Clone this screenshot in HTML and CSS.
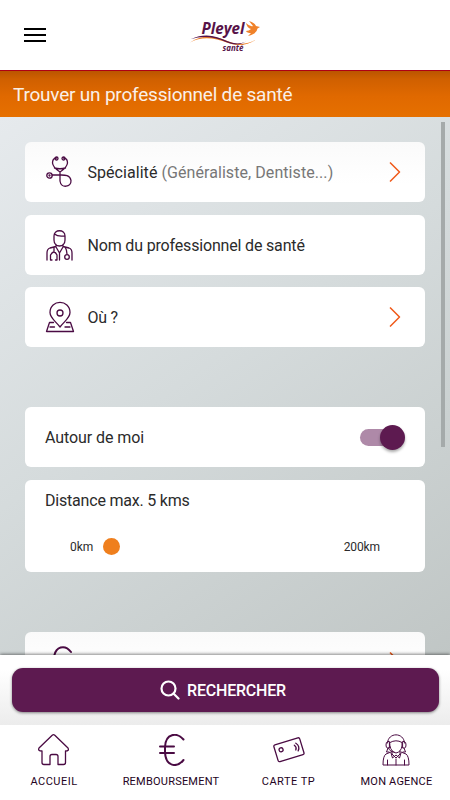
FILE: index.html
```html
<!DOCTYPE html>
<html lang="fr">
<head>
<meta charset="utf-8">
<title>Trouver un professionnel de santé</title>
<link rel="stylesheet" href="styles.css">
</head>
<body>
<div class="app">
  <header class="topbar">
    <div class="menu"><i></i><i></i><i></i></div>
    <svg class="logo" viewBox="0 0 74 36" width="74" height="36">
      <text class="brand" x="12.500" y="16" textLength="43" lengthAdjust="spacingAndGlyphs">Pleyel</text>
      <text class="brand-sub" x="33.500" y="33" textLength="21" lengthAdjust="spacingAndGlyphs">santé</text>
      <path d="M1 24.500C15 15 29 19 41 24Q55 29 68 21Q54 30.500 39 25C25 19.500 13 18 1 24.500Z" fill="#f0822a"/>
      <path d="M2 21C16 14.500 28 18 38 23Q48 27.500 57 23.500Q48 29 37 24C25 18.500 14 17.500 2 21Z" fill="#571349"/>
      <path d="M57 5Q61 9 64 8L60 3Q66 5 67 8L71 9L68.500 10.500Q68 16 59 18L62 15Q58 15 57 13Q60 13 62 11Q58 10 57 5Z" fill="#f0822a"/>
    </svg>
  </header>
  <h1 class="title"><span>Trouver un professionnel de santé</span></h1>
  <main class="content">
    <section class="card card-shade">
      <svg class="icon" viewBox="-2 0 30 32" width="30" height="32">
        <path d="M9.500 2C6.500 2 5.500 4 5.500 7C6 11 9 13.500 13 16C17 13.500 20 11 20.500 7C20.500 4 19.500 2 16.500 2M7.500 12Q13 13.500 18.500 12M13 16V25C14 33 24.500 31 24 24.500C23 18.500 17 19 13 19H5"/>
        <circle cx="9.500" cy="2.500" r="1.500"/><circle cx="16.500" cy="2.500" r="1.500"/><circle cx="2.500" cy="19.500" r="2.700"/><circle cx="2.500" cy="19.500" r=".5"/>
      </svg>
      <span class="label t-spec">Spécialité</span><span class="hint">(Généraliste, Dentiste...)</span>
      <svg class="arrow" viewBox="0 0 12 20" width="12" height="20"><path d="M1 .5L10.500 10L1 19.500"/></svg>
    </section>
    <section class="card">
      <svg class="icon" viewBox="0 0 30 32" width="30" height="32">
        <path d="M9 7C9 0 20 0 20 7V11C20 19 9 19 9 11ZM9.500 5C13 8 16 7 19.500 7M11 15.500V18L14.500 24L18 18V15.500M11 17.500L5 19Q2 20 2 24V31M18 17.500L24 19Q27 20 27 24V31M9 18V23M7 31H5.500V26Q9 20 12 26V31H10.500M14.500 24V31M20 18Q22 21 22 25"/>
        <circle cx="22" cy="28" r="2.300"/>
      </svg>
      <span class="label t-nom">Nom du professionnel de santé</span>
    </section>
    <section class="card">
      <svg class="icon" viewBox="0 0 30 32" width="30" height="32">
        <path d="M15 26C10.500 20 5 17 5 11.500C5-2 25-2 25 11.500C25 17 19.500 20 15 26ZM8.500 21.500H4.500L1.500 30.500H28.500L25.500 21.500H21.500M5 26H9.500M20 26H25"/>
        <circle cx="15" cy="12" r="3"/>
      </svg>
      <span class="label t-ou">Où ?</span>
      <svg class="arrow" viewBox="0 0 12 20" width="12" height="20"><path d="M1 .5L10.500 10L1 19.500"/></svg>
    </section>
    <section class="card card-gap">
      <span class="label t-autour">Autour de moi</span>
      <span class="switch"><span class="knob"></span></span>
    </section>
    <section class="card distance">
      <span class="label t-dist">Distance max. 5 kms</span>
      <div class="range"><span class="t-min">0km</span><span class="dot"></span><span class="max t-max">200km</span></div>
    </section>
    <section class="card card-gap card-shade">
      <svg class="icon euro-card" viewBox="0 0 30 32" width="30" height="32"><path d="M26 6C20-2 10 0 9 12V19C10 31 20 34 26 26M4 12H19M4 19H19"/></svg>
      <svg class="arrow" viewBox="0 0 12 20" width="12" height="20"><path d="M1 .5L10.500 10L1 19.500"/></svg>
    </section>
    <div class="scrollbar"></div>
  </main>
  <div class="actions">
    <button class="search">
      <svg viewBox="0 0 20 20" width="20" height="20"><circle cx="8.500" cy="8.500" r="7"/><path d="M13.500 13.500L18.500 18.500"/></svg>
      <span class="t-search">RECHERCHER</span>
    </button>
  </div>
  <nav class="tabs">
    <a class="tab">
      <svg viewBox="0.500 0 32 32" width="32" height="32"><path d="M14.700 1.200Q16 .2 17.300 1.200L30.500 14Q32 17 28 17V28.500Q28 30.500 26 30.500H20.500V22.500Q20.500 20.500 18.500 20.500H14.500Q12.500 20.500 12.500 22.500V30.500H6.500Q4.500 30.500 4.500 28.500V17Q0 17 1.500 14Z"/></svg>
      <span class="t-home">ACCUEIL</span>
    </a>
    <a class="tab">
      <svg class="euro" viewBox="0 0 32 32" width="32" height="32"><path d="M28.500 5.500C22-2 10.500-1 10 13V18C10.500 33 22 34 28.500 26M5 12.500H19M5 19H19"/></svg>
      <span class="t-remb">REMBOURSEMENT</span>
    </a>
    <a class="tab">
      <svg viewBox="0 0 32 32" width="32" height="32"><g transform="rotate(-17 16 16)"><rect x="2.500" y="7" width="27" height="17.500" rx="1.500"/><circle cx="8.500" cy="13.500" r="2"/><path d="M22.500 13Q24.500 15.500 22.500 18M24.500 11.500Q28 15.500 24.500 19.500"/></g></svg>
      <span class="t-carte">CARTE TP</span>
    </a>
    <a class="tab">
      <svg class="agent" viewBox="1 0 32 32" width="32" height="32"><path d="M7.500 9C8-2 24-2 24.500 9M10 8.500Q16 5 22 8.500V12Q21 18 16 19Q11 18 10 12ZM9 7.500H7.500Q6 8 6 11T7.500 14H9ZM23 7.500H24.500Q26 8 26 11T24.500 14H23ZM8 14L6.500 18H9M24 14L25.500 18H23M12 17V20L16 24L20 20V17M11 18L6 20Q3 22 3 31H29Q29 22 26 20L21 18M11 19L12.500 24L16 21L19.500 24L21 19M16 25V31M7.500 26V31M24.500 26V31M8.500 14Q10 18 14 18"/></svg>
      <span class="t-agence">MON AGENCE</span>
    </a>
  </nav>
</div>
</body>
</html>
```
FILE: styles.css
```css
* { box-sizing: border-box; }
body { margin: 0; font-family: Roboto, "Liberation Sans", sans-serif; color: #2b2b2b; }
.app { width: 450px; height: 800px; overflow: hidden; display: flex; flex-direction: column; background: #fff; }
svg { fill: none; stroke: #4a0b43; stroke-width: 1.3; stroke-linecap: round; stroke-linejoin: round; flex: none; }
span { white-space: nowrap; }
.topbar { height: 70px; display: flex; align-items: flex-start; }
.menu { width: 22px; margin: 28px 0 0 24px; display: grid; gap: 4px; }
.menu i { height: 2px; background: #000; }
.logo { margin: 18px 0 0 143px; stroke: none; }
.brand, .brand-sub { font-family: "Open Sans", sans-serif; font-weight: 700; font-style: italic; fill: #571349; }
.brand { font-size: 15.5px; }
.brand-sub { font-size: 8px; }
.title { height: 47.400px; margin: 0; padding: 0 0 0 13px; border-top: 1px solid #ae0014; background: linear-gradient(#ba5500, #d06000 18%, #e06900 55%, #e67000); color: #faf0e8; font-size: 19px; font-weight: 400; line-height: 48px; }
.title span { letter-spacing: -.21px; }
.content { position: relative; height: 537.600px; overflow: hidden; padding: 25px; background: linear-gradient(145deg, #e6eaed, #d5dbdc 46%, #c0c6c5); }
.card { height: 60px; margin-bottom: 12.500px; padding: 0 20px; display: flex; align-items: center; background: #fff; border-radius: 6px; font-size: 16px; }
.card-shade { background: linear-gradient(#fafafa, #fff 70%); }
.card-gap { margin-top: 60px; }
.icon { margin-right: 12.500px; }
.euro-card { stroke-width: 2; }
.label, .hint { padding-top: 1px; }
.t-spec { letter-spacing: .05px; }
.t-nom { letter-spacing: -.17px; }
.t-ou { letter-spacing: -.3px; }
.t-autour { letter-spacing: -.08px; }
.t-dist { letter-spacing: -.2px; }
.hint { margin-left: 4px; color: #777; letter-spacing: .07px; }
.arrow { margin-left: auto; margin-right: 4px; stroke: #f05a1a; stroke-width: 1.5; stroke-linecap: butt; }
.switch { width: 45px; height: 17px; margin-left: auto; border-radius: 9px; background: linear-gradient(90deg, #ae89a8 38px, transparent 38px); display: flex; align-items: center; justify-content: flex-end; }
.knob { width: 25px; height: 25px; border-radius: 50%; background: #5d1a50; box-shadow: 0 2px 3px #0005; }
.distance { height: 92.500px; flex-direction: column; align-items: stretch; padding-top: 10px; }
.range { display: flex; align-items: center; margin: 28px 25px 0; font-size: 12px; height: 17px; }
.range .t-min, .range .t-max { padding-top: 1px; }
.dot { width: 17px; height: 17px; margin-left: 9.500px; border-radius: 50%; background: #ef7f1d; }
.max { margin-left: auto; letter-spacing: -.1px; }
.scrollbar { position: absolute; top: 5px; right: 5px; width: 4px; height: 325px; background: #a5aaaa; }
.actions { position: relative; height: 70px; padding: 12.600px 11.500px; background: linear-gradient(#fff 20%, #ececec); box-shadow: 0 -1px 3px #0007; }
.search { width: 427px; height: 44.500px; padding: 1px 4px 0 0; border: 0; border-radius: 11px; background: #5d1a50; box-shadow: 0 1px 3px #0007; display: flex; align-items: center; justify-content: center; gap: 7px; color: #fff; font: 500 16px Roboto, sans-serif; }
.search svg { stroke: #fff; stroke-width: 2.200; }
.t-search { letter-spacing: -.2px; }
.tabs { flex: 1; position: relative; display: grid; grid-template-columns: 108px 126px 109px 107px; background: #fff; }
.tab { display: flex; flex-direction: column; align-items: center; padding-top: 9px; font-size: 11px; line-height: 14px; color: #250322; gap: 9px; }
.t-home { letter-spacing: .5px; }
.t-remb { letter-spacing: .22px; }
.t-carte { letter-spacing: .5px; }
.t-agence { letter-spacing: .2px; }
.euro { stroke-width: 2; }
.agent { stroke-width: 1; }
```
